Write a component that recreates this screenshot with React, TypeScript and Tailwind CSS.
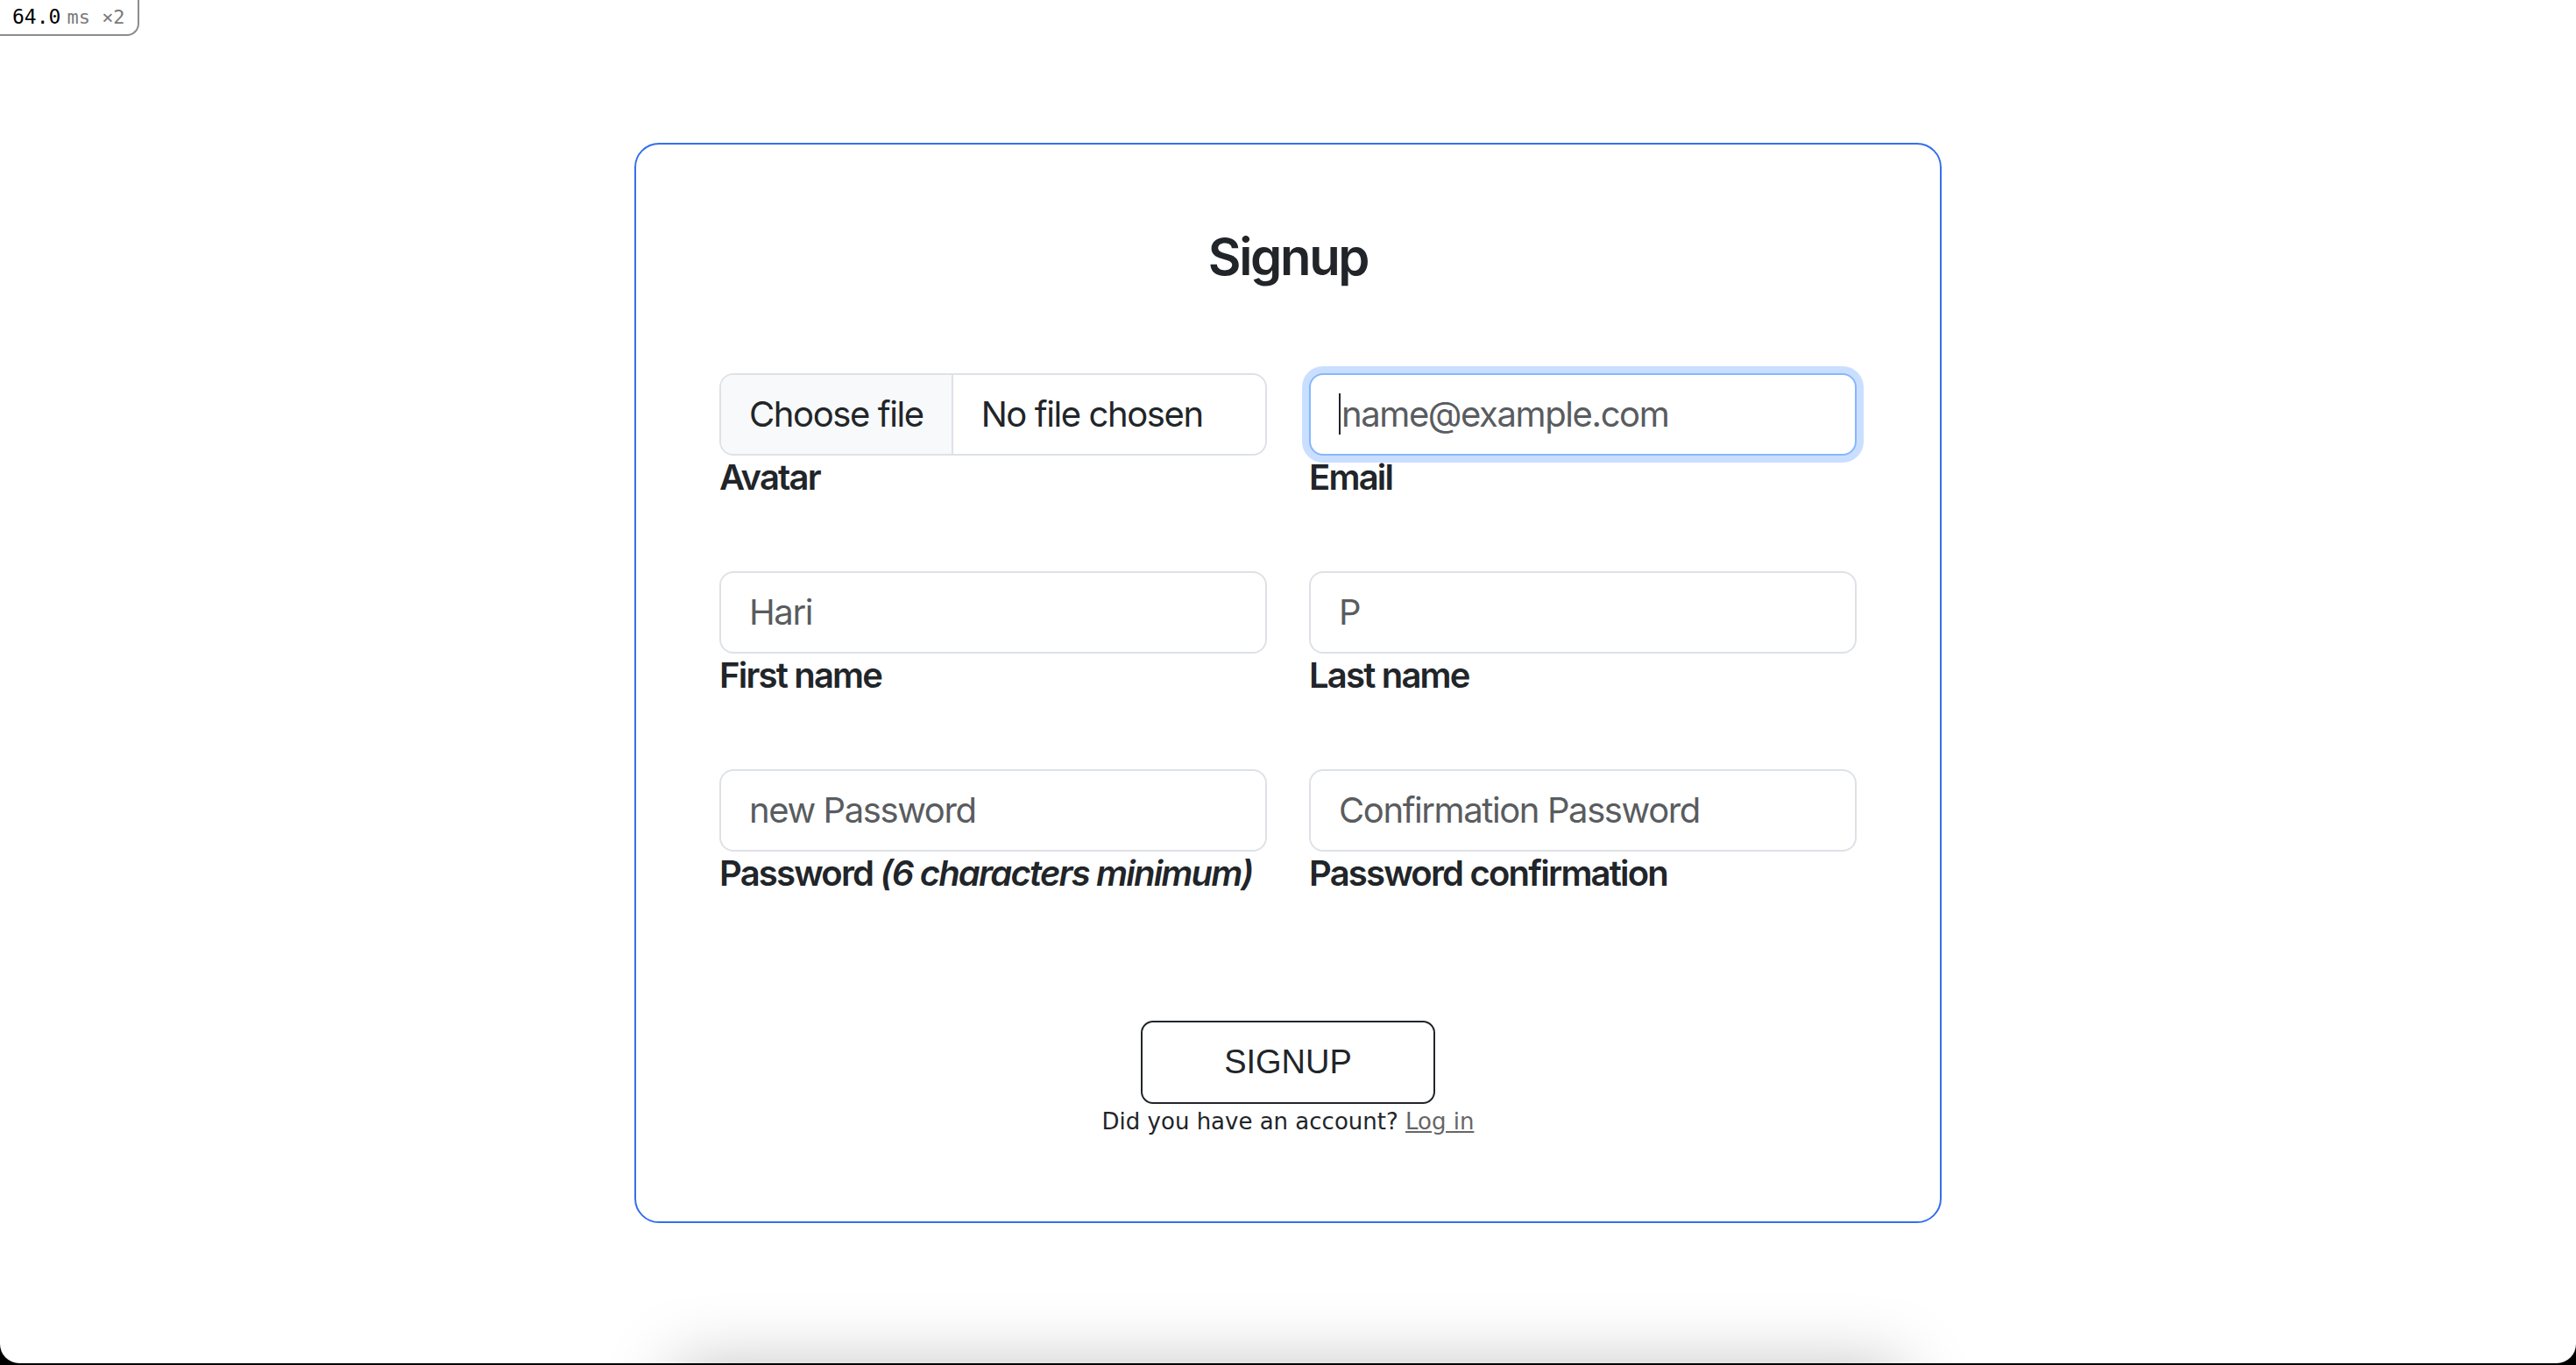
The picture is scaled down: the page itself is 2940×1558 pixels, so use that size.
import type { ReactNode } from 'react';

function PerfBadge() {
  return (
    <div className="absolute left-0 top-0 z-10 flex h-[41px] w-[159px] items-center rounded-br-[14px] border-b-2 border-r-2 border-[#8c8c8c] bg-white pl-[14px] font-['DejaVu_Sans_Mono',monospace]">
      <span className="text-[23px] leading-none text-black">64.0</span>
      <span className="ml-[7px] text-[22px] leading-none text-[#7a7a7a]">ms ×2</span>
    </div>
  );
}

function Field({ label, children }: { label: ReactNode; children: ReactNode }) {
  return (
    <div className="flex flex-col">
      {children}
      <label className="mt-[1px] whitespace-nowrap text-[40px] font-semibold leading-[1.2] tracking-[-0.045em] text-[#212529]">
        {label}
      </label>
    </div>
  );
}

function TextBox({ placeholder, focused }: { placeholder: string; focused?: boolean }) {
  if (focused) {
    return (
      <div className="flex h-[94px] items-center rounded-[16px] border-2 border-[#86b7fe] bg-white px-[32px] text-[40px] tracking-[-0.035em] shadow-[0_0_0_8px_rgba(13,110,253,0.22)]">
        <span className="mr-[1px] h-[47px] w-[2px] bg-[#212529]" />
        <span className="text-[#595c5f]">{placeholder}</span>
      </div>
    );
  }
  return (
    <div className="flex h-[94px] items-center rounded-[16px] border-2 border-[#dee2e6] bg-white px-[32px] text-[40px] tracking-[-0.035em] text-[#595c5f]">
      {placeholder}
    </div>
  );
}

function FileBox() {
  return (
    <div className="flex h-[94px] items-stretch overflow-hidden rounded-[16px] border-2 border-[#dee2e6] bg-white text-[40px] tracking-[-0.035em] text-[#212529]">
      <div className="flex items-center border-r-2 border-[#dee2e6] bg-[#f8f9fa] px-[32px]">Choose file</div>
      <div className="flex items-center pl-[32px]">No file chosen</div>
    </div>
  );
}

export default function App() {
  return (
    <div className="h-[1558px] bg-black">
      <div className="relative h-[1556px] overflow-hidden rounded-b-[22px] bg-white font-['Inter',sans-serif] text-[#212529]">
        <PerfBadge />
        <div className="flex flex-col items-center pt-[163px]">
          <form className="w-[1492px] rounded-[28px] border-2 border-[#3370ee] px-[95px] pb-[96px] pt-[94px]">
            <h1 className="text-center text-[58px] font-semibold leading-[1.2] tracking-[-0.04em]">Signup</h1>

            <div className="mt-[97px] grid grid-cols-2 gap-x-[48px] gap-y-[83px]">
              <Field label="Avatar">
                <FileBox />
              </Field>
              <Field label="Email">
                <TextBox placeholder="name@example.com" focused />
              </Field>
              <Field label="First name">
                <TextBox placeholder="Hari" />
              </Field>
              <Field label="Last name">
                <TextBox placeholder="P" />
              </Field>
              <Field
                label={
                  <>
                    Password <em>(6 characters minimum)</em>
                  </>
                }
              >
                <TextBox placeholder="new Password" />
              </Field>
              <Field label="Password confirmation">
                <TextBox placeholder="Confirmation Password" />
              </Field>
            </div>

            <div className="mt-[144px] flex flex-col items-center">
              <button
                type="button"
                className="h-[95px] w-[336px] rounded-[14px] border-2 border-[#212529] bg-white font-['Liberation_Sans',sans-serif] text-[38px] text-[#212529]"
              >
                SIGNUP
              </button>
              <p className="mt-[2px] font-['DejaVu_Sans',sans-serif] text-[26px] leading-[1.4] text-[#212529]">
                Did you have an account?{' '}
                <a href="#" className="text-[#666] underline">
                  Log in
                </a>
              </p>
            </div>
          </form>
          <div className="mt-[164px] h-[200px] w-[1400px] shrink-0 bg-white shadow-[0_0_80px_rgba(0,0,0,0.25)]" />
        </div>
      </div>
    </div>
  );
}
